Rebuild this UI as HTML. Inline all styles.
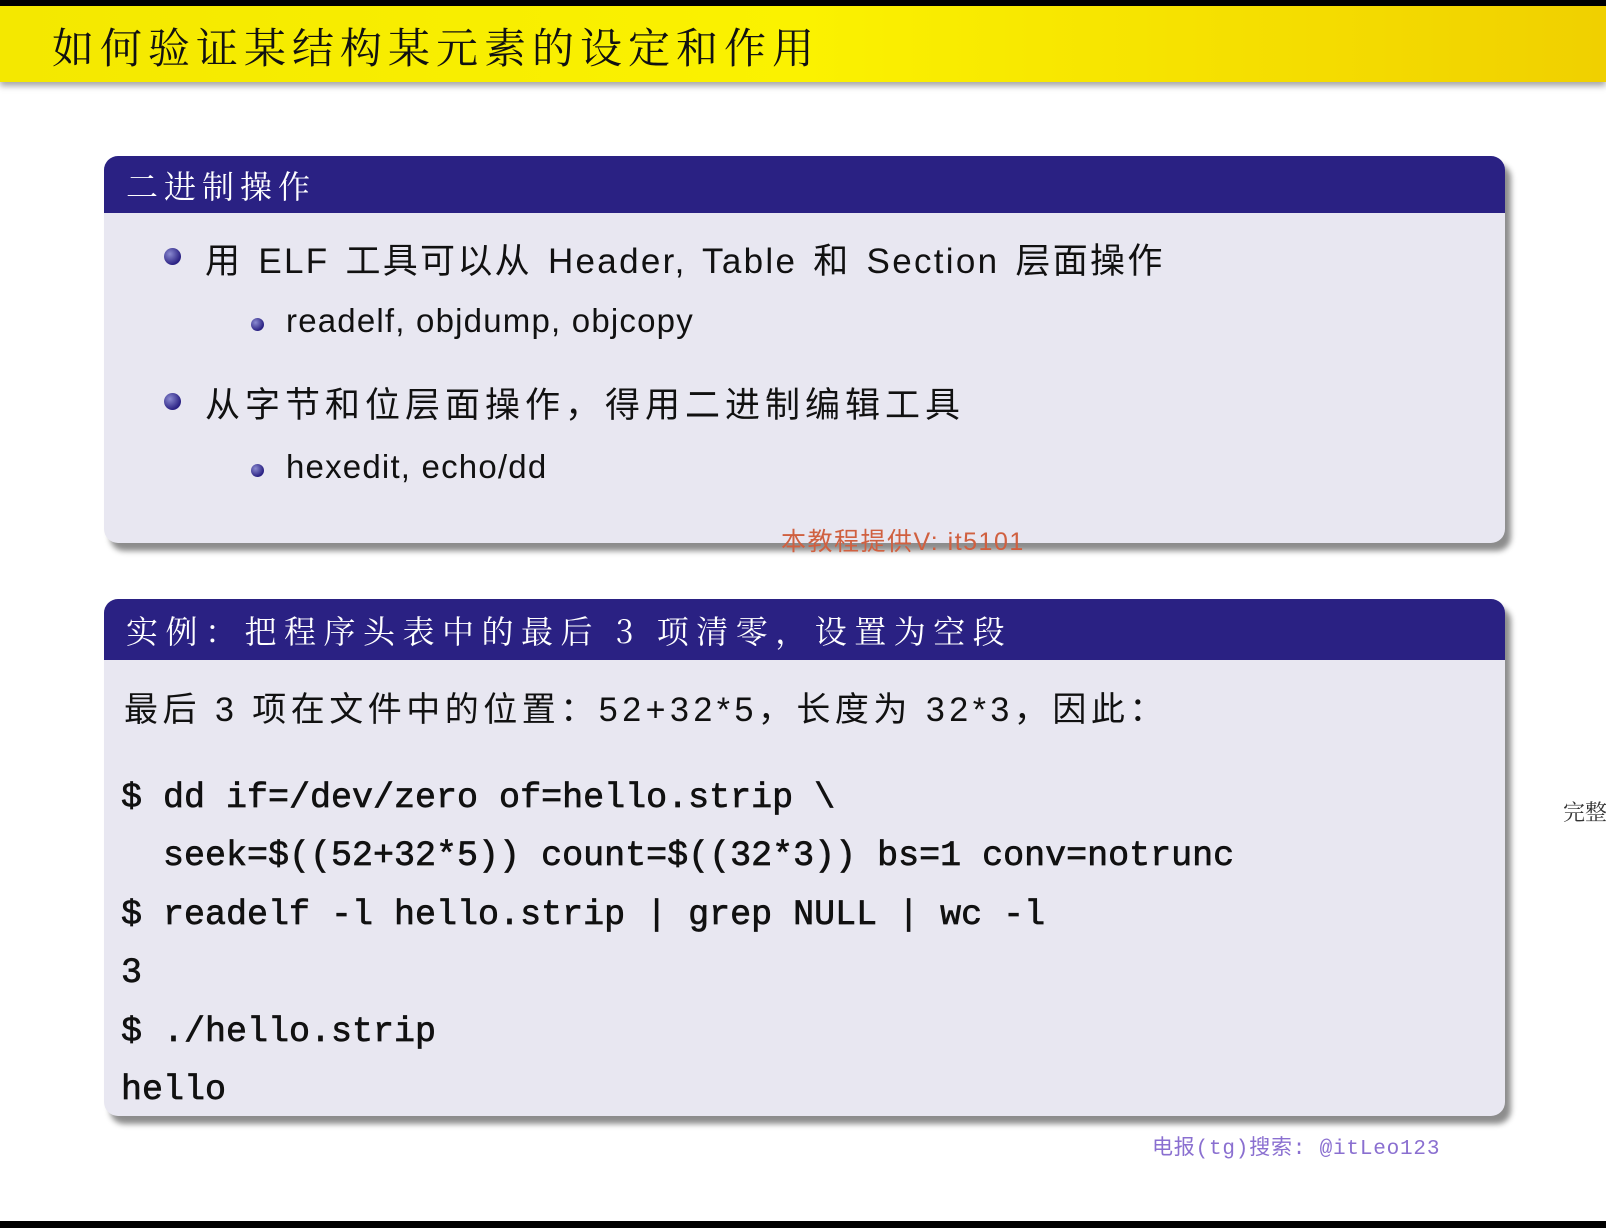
<!DOCTYPE html>
<html><head><meta charset="utf-8"><style>
body{margin:0;width:1606px;height:1228px;background:#fff;position:relative;overflow:hidden;font-family:"Liberation Sans","Noto Sans CJK SC",sans-serif;}
.abs{position:absolute;white-space:pre;}
.top{position:absolute;left:0;top:0;width:1606px;height:6px;background:#000;}
.title{position:absolute;left:0;top:6px;width:1606px;height:76px;background:linear-gradient(90deg,#f4e800,#fbf200 50%,#f0d000);box-shadow:0 4px 6px rgba(0,0,0,.35);}
.box{position:absolute;left:104px;width:1401px;background:#e8e7f1;border-radius:14px;box-shadow:6px 8px 6px rgba(0,0,0,.45);}
.hd{background:#2a2183;color:#fff;border-radius:14px 14px 0 0;font-family:"Noto Serif CJK SC",serif;}
.code{font-family:"Liberation Mono",monospace;font-size:35px;color:#111;-webkit-text-stroke:0.7px #111;}
.dot{position:absolute;border-radius:50%;background:radial-gradient(circle at 35% 35%,#8a8ad0,#2a2183 70%);}
</style></head><body>
<div class="top"></div>
<div class="title"><div class="abs" style="left:52px;top:10px;font-size:42px;font-family:'Noto Serif CJK SC',serif;color:#111;letter-spacing:6px">如何验证某结构某元素的设定和作用</div></div>
<div class="box" style="top:156px;height:387px">
 <div class="hd" style="height:57px"><div class="abs" style="left:22px;top:6px;font-size:32px;letter-spacing:6px">二进制操作</div></div>
</div>
<div class="dot" style="left:164px;top:248px;width:17px;height:17px"></div>
<div class="abs" style="left:205px;top:233px;font-size:35px;color:#111;letter-spacing:2.3px;word-spacing:4px">用 ELF 工具可以从 Header, Table 和 Section 层面操作</div>
<div class="dot" style="left:251px;top:318px;width:13px;height:13px"></div>
<div class="abs" style="left:286px;top:302px;font-size:33px;color:#111;letter-spacing:1.2px">readelf, objdump, objcopy</div>
<div class="dot" style="left:164px;top:393px;width:17px;height:17px"></div>
<div class="abs" style="left:205px;top:377px;font-size:35px;color:#111;letter-spacing:5px">从字节和位层面操作，得用二进制编辑工具</div>
<div class="dot" style="left:251px;top:464px;width:13px;height:13px"></div>
<div class="abs" style="left:286px;top:448px;font-size:33px;color:#111;letter-spacing:1.2px">hexedit, echo/dd</div>
<div class="abs" style="left:781px;top:522px;font-size:25px;color:#d06040;letter-spacing:1.5px">本教程提供V: it5101</div>
<div class="box" style="top:599px;height:517px">
 <div class="hd" style="height:61px"><div class="abs" style="left:22px;top:8px;font-size:32px;letter-spacing:7.5px">实例：把程序头表中的最后 3 项清零，设置为空段</div></div>
</div>
<div class="abs" style="left:124px;top:682px;font-size:34px;color:#111;letter-spacing:4.5px">最后 3 项在文件中的位置：52+32*5，长度为 32*3，因此：</div>
<div class="abs code" style="left:121px;top:778px">$ dd if=/dev/zero of=hello.strip \</div>
<div class="abs code" style="left:121px;top:836px">  seek=$((52+32*5)) count=$((32*3)) bs=1 conv=notrunc</div>
<div class="abs code" style="left:121px;top:895px">$ readelf -l hello.strip | grep NULL | wc -l</div>
<div class="abs code" style="left:121px;top:953px">3</div>
<div class="abs code" style="left:121px;top:1012px">$ ./hello.strip</div>
<div class="abs code" style="left:121px;top:1070px">hello</div>
<div class="abs" style="left:1152px;top:1131px;font-size:21px;color:#8a6fd0;letter-spacing:0.8px;font-family:'Liberation Mono','Noto Sans CJK SC',monospace">电报(tg)搜索: @itLeo123</div>
<div class="abs" style="left:1563px;top:796px;font-size:22px;color:#333;font-family:'Noto Serif CJK SC',serif">完整</div>
<div style="position:absolute;left:0;top:1221px;width:1606px;height:7px;background:#000"></div>
</body></html>
